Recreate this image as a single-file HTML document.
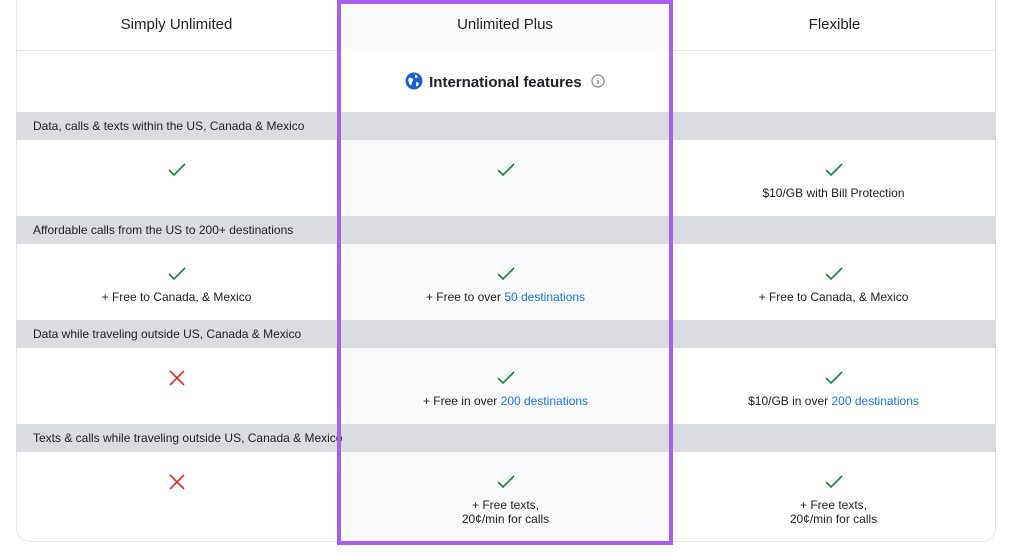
<!DOCTYPE html>
<html><head><style>
*{margin:0;padding:0;box-sizing:border-box}
body{width:1024px;height:557px;background:#fff;position:relative;overflow:hidden;font-family:"Liberation Sans",sans-serif;color:#202124}
.a{position:absolute}
.band{position:absolute;left:16px;width:980px;height:28px;background:#dadce0;font-size:12px;line-height:28px;padding-left:17px;white-space:nowrap;overflow:hidden}
.mid{position:absolute;left:337px;width:336px;background:#f8f9fa}
.cell{position:absolute;width:321px;text-align:center;font-size:12px;line-height:14px}
.chk{display:block;margin:0 auto 9px;width:18px;height:14px}
a{color:#1a73e8;text-decoration:none}
.h{position:absolute;top:16px;font-size:15px;text-align:center}
</style></head><body>
<div class="a" style="left:16px;top:0;width:980px;height:542px;border:1px solid #e3e4e6;border-top:none;border-radius:0 0 14px 14px"></div>
<div class="a" style="left:16px;top:50px;width:980px;height:1px;background:#e3e4e6"></div>
<div class="mid" style="top:0;height:51px"></div>
<div class="mid" style="top:140px;height:76px"></div>
<div class="mid" style="top:244px;height:76px"></div>
<div class="mid" style="top:348px;height:76px"></div>
<div class="mid" style="top:452px;height:90px"></div>
<div class="band" style="top:112px">Data, calls &amp; texts within the US, Canada &amp; Mexico</div>
<div class="band" style="top:216px">Affordable calls from the US to 200+ destinations</div>
<div class="band" style="top:320px">Data while traveling outside US, Canada &amp; Mexico</div>
<div class="band" style="top:424px;padding-right:657px">Texts &amp; calls while traveling outside US, Canada &amp; Mexico</div>
<div class="h" style="left:16px;width:321px">Simply Unlimited</div>
<div class="h" style="left:337px;width:336px">Unlimited Plus</div>
<div class="h" style="left:673px;width:323px">Flexible</div>
<div class="a" style="left:337px;top:72px;width:336px;text-align:center;font-size:15px;font-weight:bold;line-height:18px">
<svg width="18" height="18" viewBox="0 0 18 18" style="vertical-align:-3px;margin-right:6px"><circle cx="9" cy="9" r="8.5" fill="#1a5fd0"/><path d="M3.5 6.5c2-1.5 4.5-.5 4.5 1.5s-2 2-1 4l-1.5 1.5c-1.5-2-2.5-4-2-7zM10 2.8c2 0 3.5 2 2.2 3s-2.2 0-2.2-1z M11.5 10c2 .3 2.8 1.5 1.8 3.3l-2 1.5c0-2-1-3 .2-4.8z" fill="#fff"/></svg>International features
<svg width="14" height="14" viewBox="0 0 14 14" style="vertical-align:-1px;margin-left:5px"><circle cx="7" cy="7" r="6" fill="none" stroke="#80868b" stroke-width="1.2"/><path d="M7 6v4M7 4v.8" stroke="#80868b" stroke-width="1.3"/></svg></div>
<svg width="0" height="0" style="position:absolute"><defs><symbol id="c" viewBox="0 0 18 14"><path d="M1 7l5 5L17 1" fill="none" stroke="#188038" stroke-width="1.6"/></symbol><symbol id="x" viewBox="0 0 16 16"><path d="M1 1l14 14M15 1L1 15" stroke="#d93025" stroke-width="1.6"/></symbol></defs></svg>
<div class="cell" style="left:16px;top:163px"><svg class="chk"><use href="#c"/></svg></div>
<div class="cell" style="left:345px;top:163px"><svg class="chk"><use href="#c"/></svg></div>
<div class="cell" style="left:673px;top:163px"><svg class="chk"><use href="#c"/></svg>$10/GB with Bill Protection</div>
<div class="cell" style="left:16px;top:267px"><svg class="chk"><use href="#c"/></svg>+ Free to Canada, &amp; Mexico</div>
<div class="cell" style="left:345px;top:267px"><svg class="chk"><use href="#c"/></svg>+ Free to over <a>50 destinations</a></div>
<div class="cell" style="left:673px;top:267px"><svg class="chk"><use href="#c"/></svg>+ Free to Canada, &amp; Mexico</div>
<div class="cell" style="left:16px;top:370px"><svg class="chk" style="width:16px;height:16px"><use href="#x"/></svg></div>
<div class="cell" style="left:345px;top:371px"><svg class="chk"><use href="#c"/></svg>+ Free in over <a>200 destinations</a></div>
<div class="cell" style="left:673px;top:371px"><svg class="chk"><use href="#c"/></svg>$10/GB in over <a>200 destinations</a></div>
<div class="cell" style="left:16px;top:474px"><svg class="chk" style="width:16px;height:16px"><use href="#x"/></svg></div>
<div class="cell" style="left:345px;top:475px"><svg class="chk"><use href="#c"/></svg>+ Free texts,<br>20¢/min for calls</div>
<div class="cell" style="left:673px;top:475px"><svg class="chk"><use href="#c"/></svg>+ Free texts,<br>20¢/min for calls</div>
<div class="a" style="left:337px;top:0;width:336px;height:545px;border:4px solid #a95ef0"></div>
</body></html>
